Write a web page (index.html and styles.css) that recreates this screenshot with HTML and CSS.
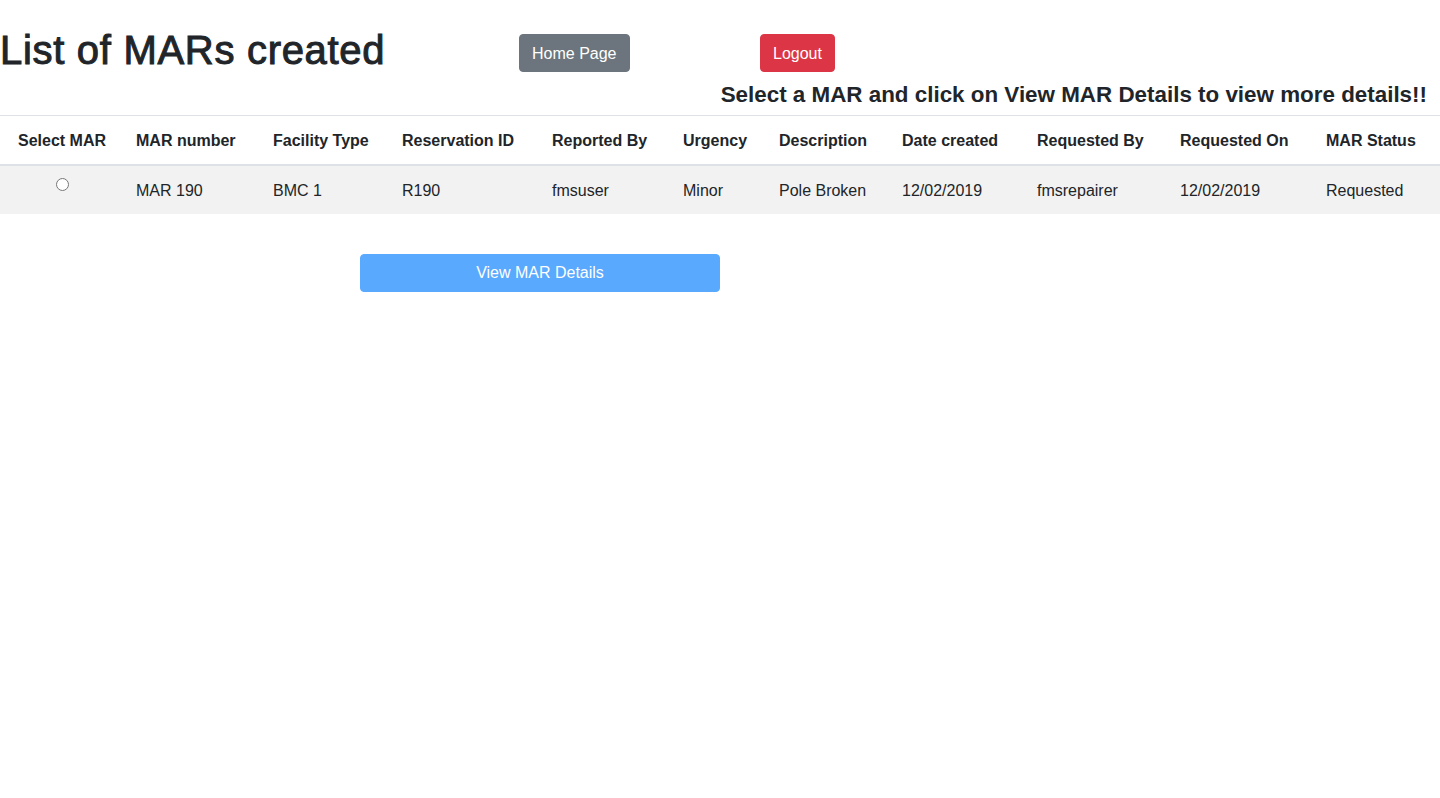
FILE: index.html
```html
<!DOCTYPE html>
<html lang="en">
<head>
<meta charset="utf-8">
<title>List of MARs created</title>
<link rel="stylesheet" href="styles.css">
</head>
<body>
<header class="top">
  <h1 class="title">List of MARs created</h1>
  <div class="btn-cell"><button class="btn btn-secondary">Home Page</button></div>
  <div class="btn-cell"><button class="btn btn-danger">Logout</button></div>
</header>
<h5 class="hint">Select a MAR and click on View MAR Details to view more details!!</h5>
<table class="table">
  <colgroup>
    <col style="width:124px"><col style="width:137px"><col style="width:129px"><col style="width:150px">
    <col style="width:131px"><col style="width:96px"><col style="width:123px"><col style="width:135px">
    <col style="width:143px"><col style="width:146px"><col style="width:126px">
  </colgroup>
  <thead>
    <tr>
      <th class="center">Select MAR</th>
      <th>MAR number</th>
      <th>Facility Type</th>
      <th>Reservation ID</th>
      <th>Reported By</th>
      <th>Urgency</th>
      <th>Description</th>
      <th>Date created</th>
      <th>Requested By</th>
      <th>Requested On</th>
      <th>MAR Status</th>
    </tr>
  </thead>
  <tbody>
    <tr class="striped">
      <td class="center"><input type="radio" name="mar" class="radio"></td>
      <td>MAR 190</td>
      <td>BMC 1</td>
      <td>R190</td>
      <td>fmsuser</td>
      <td>Minor</td>
      <td>Pole Broken</td>
      <td>12/02/2019</td>
      <td>fmsrepairer</td>
      <td>12/02/2019</td>
      <td>Requested</td>
    </tr>
  </tbody>
</table>
<div class="actions">
  <button class="btn btn-primary-disabled">View MAR Details</button>
</div>
</body>
</html>
```
FILE: styles.css
```css
* { box-sizing: border-box; }
html, body {
  margin: 0;
  padding: 0;
  background: #fff;
  color: #212529;
  font-family: "Liberation Sans", Arial, Helvetica, sans-serif;
  font-size: 16px;
  line-height: 1.5;
}
.top {
  display: grid;
  grid-template-columns: 519px 241px auto;
  align-items: start;
}
.title {
  margin: 26px 0 0 0;
  font-size: 40px;
  font-weight: 400;
  line-height: 1.2;
  letter-spacing: 0.7px;
  -webkit-text-stroke: 1px #212529;
  white-space: nowrap;
}
.btn-cell { padding-top: 34px; }
.btn {
  display: inline-block;
  font-family: inherit;
  font-size: 16px;
  line-height: 24px;
  padding: 7px 12px 5px;
  border: 1px solid transparent;
  border-radius: 4px;
  color: #fff;
  cursor: pointer;
}
.btn-secondary { background: #6c757d; border-color: #6c757d; }
.btn-danger { background: #dc3545; border-color: #dc3545; }
.hint {
  margin: 8px 13px 7px 0;
  text-align: right;
  font-size: 22.4px;
  font-weight: 700;
  line-height: 26px;
  white-space: nowrap;
}
.table {
  width: 100%;
  table-layout: fixed;
  border-collapse: collapse;
  margin-bottom: 16px;
}
.table th, .table td {
  padding: 13px 12px 11px;
  text-align: left;
  vertical-align: top;
  border-top: 1px solid #dee2e6;
  white-space: nowrap;
}
.table th {
  font-weight: 700;
  vertical-align: bottom;
  border-bottom: 2px solid #dee2e6;
}
.table .center { text-align: center; }
.striped td { background: #f2f2f2; }
.radio {
  margin: -1px 0 0;
  width: 13px;
  height: 13px;
  vertical-align: top;
}
.actions {
  display: grid;
  grid-template-columns: repeat(4, 1fr);
  padding-top: 24px;
}
.btn-primary-disabled {
  grid-column: 2;
  width: 100%;
  padding: 6px 12px;
  background: #59a9ff;
  border-color: #59a9ff;
  cursor: default;
}
```
